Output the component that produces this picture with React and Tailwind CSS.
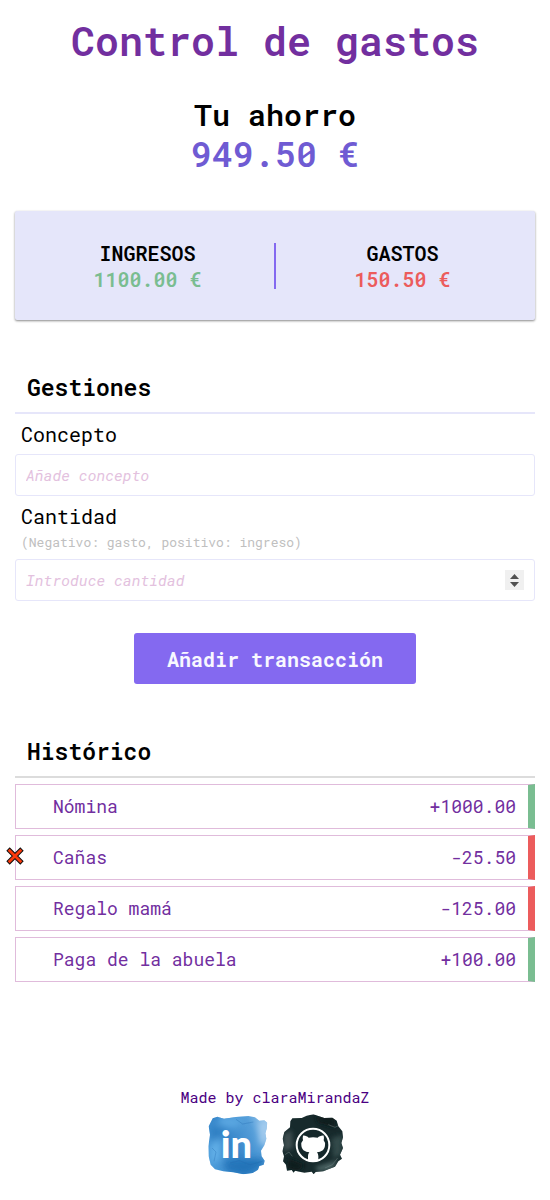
import React, { useState } from "react";

const TRANSACTIONS = [
  { id: 1, name: "Nómina", amount: 1000 },
  { id: 2, name: "Cañas", amount: -25.5 },
  { id: 3, name: "Regalo mamá", amount: -125 },
  { id: 4, name: "Paga de la abuela", amount: 100 },
];

const FIELD =
  "block h-[42px] w-full rounded-[3px] border border-[#e6e6fa] bg-white px-[10px] text-[15px] text-[#722f9f] outline-none placeholder:italic placeholder:text-[#e3c1de] placeholder:opacity-100";

function signed(n) {
  return (n < 0 ? "-" : "+") + Math.abs(n).toFixed(2);
}

function Summary({ title, value, className }) {
  return (
    <div className="flex-1 text-center text-[20px] leading-[26px]">
      <h3 className="font-semibold text-black">{title}</h3>
      <p className={className}>{value} €</p>
    </div>
  );
}

function SectionTitle({ children, className }) {
  return (
    <h2 className={"border-b-2 pb-[10px] pl-[12px] text-[23px] leading-[30px] font-semibold " + className}>
      {children}
    </h2>
  );
}

function Stepper({ onStep }) {
  return (
    <div className="absolute top-[11px] right-[11px] flex h-[20px] w-[19px] flex-col bg-[#f0f0f0]">
      <button type="button" aria-label="Aumentar" onClick={() => onStep(1)} className="flex flex-1 items-end justify-center pb-px">
        <svg width="9" height="5" viewBox="0 0 9 5" className="block">
          <path d="M0 5 4.5 0 9 5Z" fill="#505050" />
        </svg>
      </button>
      <button type="button" aria-label="Disminuir" onClick={() => onStep(-1)} className="flex flex-1 items-start justify-center pt-[2px]">
        <svg width="9" height="5" viewBox="0 0 9 5" className="block">
          <path d="M0 0 4.5 5 9 0Z" fill="#505050" />
        </svg>
      </button>
    </div>
  );
}

function Row({ item, onRemove, active }) {
  const edge = item.amount < 0 ? "border-r-[#ec5c5c]" : "border-r-[#7abd91]";
  return (
    <li
      className={
        "relative flex h-[45px] items-center justify-between border border-r-[7px] border-[#e0bbdb] pr-[12px] pl-[37px] text-[18px] text-[#722f9f] " +
        edge
      }
    >
      {active && (
        <button
          type="button"
          aria-label={"Eliminar " + item.name}
          onClick={onRemove}
          className="absolute top-[10px] -left-[11px] cursor-pointer"
        >
          <svg width="20" height="20" viewBox="0 0 20 20" className="block">
            <path d="M3 3 17 17M17 3 3 17" stroke="#111" strokeWidth="4.8" />
            <path d="M3.7 3.7 16.3 16.3M16.3 3.7 3.7 16.3" stroke="#fb3a0c" strokeWidth="2.8" />
          </svg>
        </button>
      )}
      <span>{item.name}</span>
      <span>{signed(item.amount)}</span>
    </li>
  );
}

function LinkedInIcon() {
  return (
    <svg width="75" height="72" viewBox="0 0 225 216" className="block">
      <defs>
        <linearGradient id="li-wash" x1="0" y1="0.7" x2="1" y2="0.2">
          <stop offset="0" stopColor="#4f9fdc" />
          <stop offset="0.4" stopColor="#3585c9" />
          <stop offset="0.72" stopColor="#559ed9" />
          <stop offset="1" stopColor="#a9d0f0" />
        </linearGradient>
        <filter id="li-soft" x="-30%" y="-30%" width="160%" height="160%">
          <feGaussianBlur stdDeviation="11" />
        </filter>
        <clipPath id="li-clip">
          <path d="M38 31 52 26 72 32 108 27 145 24 165 28 178 38 193 37 202 44 200 62 196 76 199 92 193 112 183 128 185 145 194 158 191 170 178 174 174 185 158 195 130 199 100 193 70 190 45 184 32 170 26 145 25 115 30 80 26 55Z" />
        </clipPath>
      </defs>
      <g clipPath="url(#li-clip)">
        <rect width="225" height="216" fill="url(#li-wash)" />
        <g filter="url(#li-soft)">
          <path d="M60 25 130 30 110 60 50 55Z" fill="#5ba8e2" />
          <path d="M30 110 65 90 60 160 30 165Z" fill="#63b0e8" />
          <path d="M70 160 190 150 190 175 140 200 80 190Z" fill="#2473b8" />
          <path d="M30 60 70 50 60 90 35 95Z" fill="#2f7fc2" />
          <path d="M175 40 210 35 203 110 180 110Z" fill="#a6cdef" />
        </g>
        <path d="M90 165 118 158 150 170 188 160M108 34 128 48 160 42M36 120 48 132 42 160" fill="none" stroke="#1f68ad" strokeOpacity="0.3" strokeWidth="3" />
      </g>
      <text x="62" y="150" fontSize="114" fontWeight="900" fill="#fff" className="font-['Lato',sans-serif]">
        in
      </text>
    </svg>
  );
}

function GitHubIcon() {
  return (
    <svg width="75" height="72" viewBox="0 0 225 216" className="block">
      <defs>
        <filter id="gh-soft" x="-20%" y="-20%" width="140%" height="140%">
          <feGaussianBlur stdDeviation="7" />
        </filter>
        <clipPath id="gh-clip">
          <path d="M52 31 80 30 95 23 115 19 130 24 148 30 172 29 185 38 190 55 202 70 204 88 199 105 204 120 195 140 201 152 190 160 180 176 160 184 145 190 122 192 116 199 110 191 88 194 60 188 56 194 50 186 36 188 33 170 24 160 27 145 22 130 27 112 23 92 28 72 45 58 46 40Z" />
        </clipPath>
      </defs>
      <g clipPath="url(#gh-clip)">
        <rect width="225" height="216" fill="#172a2c" />
        <g filter="url(#gh-soft)">
          <path d="M25 80 50 65 55 120 25 130Z" fill="#3d4d50" />
          <path d="M170 90 205 80 200 140 175 150Z" fill="#31484a" />
          <path d="M120 25 180 30 180 60 130 45Z" fill="#0b1a1d" />
          <path d="M40 150 90 170 70 190 35 180Z" fill="#0c1c1d" />
          <path d="M120 178 190 155 170 185 130 190Z" fill="#4b6364" />
        </g>
        <path d="M30 140 42 132 52 145M160 50 180 58 192 52M150 180 172 170 188 150" fill="none" stroke="#6b7d7e" strokeOpacity="0.5" strokeWidth="3" />
      </g>
      <circle cx="114" cy="111" r="49" fill="#14272a" stroke="#fff" strokeWidth="6" />
      <path
        fill="#fff"
        d="M84 83C91 82 97 86 101 89Q114 86 128 89C132 86 139 82 146 83Q148 91 146 97Q151 103 150 112C149 126 139 132 126 133Q130 138 130 144V160H99V144Q99 138 103 133C90 132 80 126 79 112Q78 103 84 97Q82 91 84 83Z"
      />
    </svg>
  );
}

export default function App() {
  const [items, setItems] = useState(TRANSACTIONS);
  const [name, setName] = useState("");
  const [amount, setAmount] = useState("");

  const income = items.filter((t) => t.amount > 0).reduce((s, t) => s + t.amount, 0);
  const spent = items.filter((t) => t.amount < 0).reduce((s, t) => s - t.amount, 0);

  function submit(e) {
    e.preventDefault();
    if (!name || !amount) return;
    setItems([...items, { id: Date.now(), name, amount: Number(amount) }]);
    setName("");
    setAmount("");
  }

  return (
    <div className="bg-white p-[15px] font-['Roboto_Mono','Liberation_Mono',monospace] text-black">
      <header className="text-center">
        <h1 className="text-[40px] leading-[52px] font-semibold text-[#722f9f]">Control de gastos</h1>
        <h2 className="mt-[28px] text-[30px] leading-[40px] font-semibold">Tu ahorro</h2>
        <p className="text-[35px] leading-[36px] font-semibold text-[#6f5bd3]">{(income - spent).toFixed(2)} €</p>
      </header>

      <main>
        <section className="mt-[40px] flex items-center rounded-[2px] bg-[#e5e6fa] px-[6px] pt-[29px] pb-[28px] shadow-[0_1px_3px_rgba(0,0,0,0.2),0_1px_2px_rgba(0,0,0,0.3)]">
          <Summary title="INGRESOS" value={income.toFixed(2)} className="font-semibold text-[#7abd91]" />
          <div className="h-[46px] w-[2px] bg-[#8469f0]" />
          <Summary title="GASTOS" value={spent.toFixed(2)} className="font-semibold text-[#ec5c5c]" />
        </section>

        <section className="mt-[52px]">
          <SectionTitle className="border-[#e6e6fa]">Gestiones</SectionTitle>
          <form onSubmit={submit}>
            <label htmlFor="concept" className="block pt-[7px] pb-[7px] pl-[6px] text-[20px] leading-[26px]">
              Concepto
            </label>
            <input
              id="concept"
              type="text"
              placeholder="Añade concepto"
              value={name}
              onChange={(e) => setName(e.target.value)}
              className={FIELD}
            />
            <label htmlFor="amount" className="block pt-[7px] pb-[3px] pl-[6px] text-[20px] leading-[26px]">
              Cantidad
              <small className="block text-[13px] leading-[27px] text-[#c0c0c0]">
                (Negativo: gasto, positivo: ingreso)
              </small>
            </label>
            <div className="relative">
              <input
                id="amount"
                type="number"
                step="0.01"
                placeholder="Introduce cantidad"
                value={amount}
                onChange={(e) => setAmount(e.target.value)}
                className={FIELD + " [appearance:textfield]"}
              />
              <Stepper onStep={(d) => setAmount(String(Number(amount) + d))} />
            </div>
            <button
              type="submit"
              className="mx-auto mt-[32px] block h-[51px] cursor-pointer rounded-[3px] bg-[#8469f0] px-[33px] text-[20px] font-bold text-[#f8f8ff]"
            >
              Añadir transacción
            </button>
          </form>
        </section>

        <section className="mt-[52px]">
          <SectionTitle className="border-[#dcdcdc]">Histórico</SectionTitle>
          <ul className="mt-[6px] flex flex-col gap-[6px]">
            {items.map((t) => (
              <Row
                key={t.id}
                item={t}
                active={t.id === 2}
                onRemove={() => setItems(items.filter((i) => i.id !== t.id))}
              />
            ))}
          </ul>
        </section>
      </main>

      <footer className="mt-[104px] flex flex-col items-center text-[#4b0082]">
        <p className="text-[15px] leading-[22px]">Made by claraMirandaZ</p>
        <div className="flex">
          <a href="#linkedin" aria-label="LinkedIn">
            <LinkedInIcon />
          </a>
          <a href="#github" aria-label="GitHub">
            <GitHubIcon />
          </a>
        </div>
      </footer>
    </div>
  );
}
